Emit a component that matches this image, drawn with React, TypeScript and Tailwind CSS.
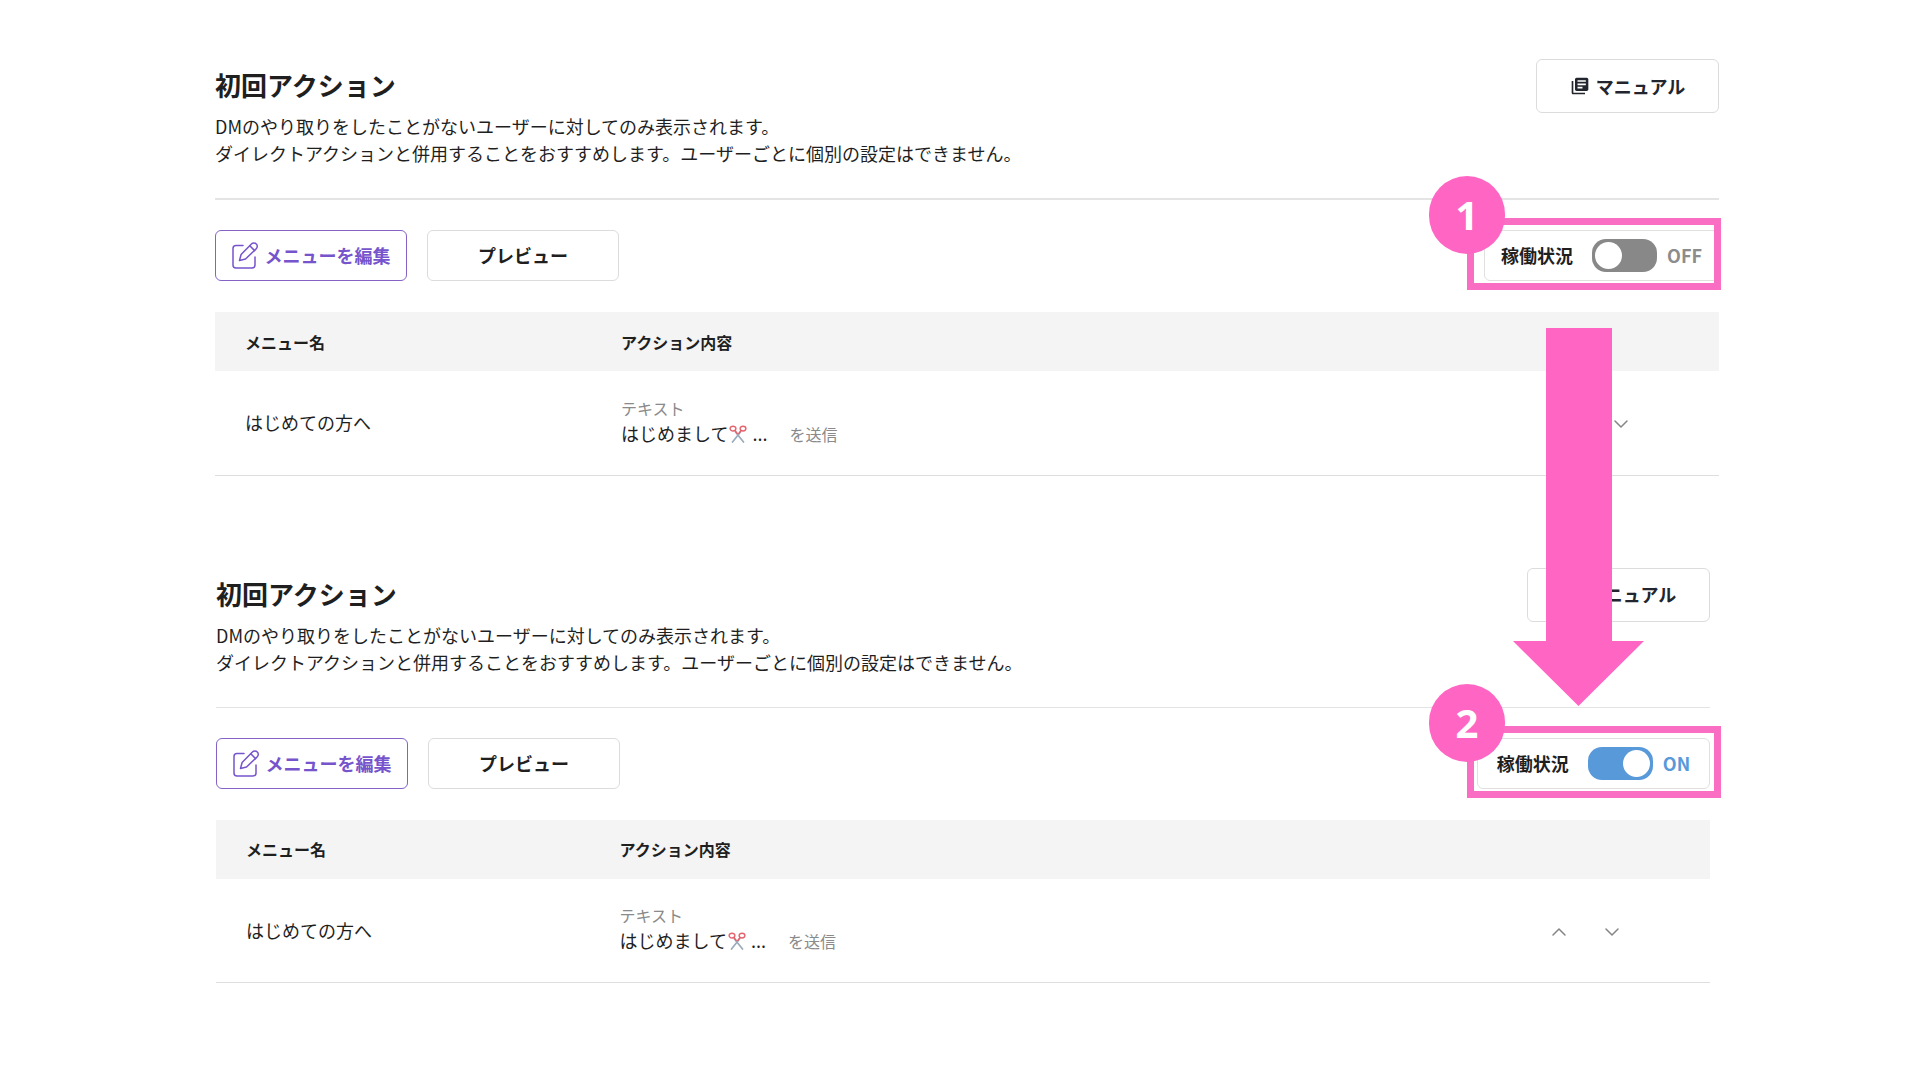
import { useId, useState } from 'react';
import { MdLibraryBooks } from 'react-icons/md';

interface StatusToggleProps {
  step: number;
  defaultOn: boolean;
  widthClass: string;
  frameClass: string;
}

interface ActionPanelProps extends StatusToggleProps {
  className?: string;
  dividerClass: string;
}

function EditIcon() {
  return (
    <svg
      width="27"
      height="27"
      viewBox="0 0 27 27"
      fill="none"
      stroke="currentColor"
      strokeWidth="1.5"
      strokeLinecap="round"
      strokeLinejoin="round"
      aria-hidden="true"
    >
      <path d="M11 3.5H4a3 3 0 0 0-3 3v16.500a3 3 0 0 0 3 3h16a3 3 0 0 0 3-3V15" />
      <path d="M7.500 18.500l1.600-6L19.400 2a3.300 3.300 0 0 1 4.900 0 3.300 3.300 0 0 1 0 4.700L13.500 17z" />
      <path d="M17.800 3.800l4.800 4.800" />
    </svg>
  );
}

function ScissorsIcon() {
  return (
    <svg className="mx-px inline-block align-[-2px]" width="18" height="18" viewBox="0 0 18 18" fill="none" aria-hidden="true">
      <path d="M6.500 7L14.500 17M11.500 7L3.500 17" stroke="#9aabba" strokeWidth="1.700" strokeLinecap="round" />
      <ellipse cx="4" cy="3.600" rx="2.900" ry="2.400" stroke="#e4636c" strokeWidth="1.400" />
      <ellipse cx="14" cy="3.600" rx="2.900" ry="2.400" stroke="#e4636c" strokeWidth="1.400" />
      <path d="M6 5.500l2.200 3M12 5.500l-2.200 3" stroke="#e4636c" strokeWidth="1.400" strokeLinecap="round" />
    </svg>
  );
}

function Chevron({ up = false }: { up?: boolean }) {
  return (
    <svg
      width="16"
      height="16"
      viewBox="0 0 16 16"
      fill="none"
      stroke="#858585"
      strokeWidth="1.500"
      strokeLinecap="round"
      strokeLinejoin="round"
      aria-hidden="true"
    >
      <path d={up ? 'M2 11l6-6 6 6' : 'M2 5l6 6 6-6'} />
    </svg>
  );
}

function StatusToggle({ step, defaultOn, widthClass, frameClass }: StatusToggleProps) {
  const id = useId();
  const [on, setOn] = useState(defaultOn);

  return (
    <div className={`relative flex h-[51px] items-center justify-center rounded-md border border-[#e0e0e0] ${widthClass}`}>
      <label htmlFor={id} className="mr-[19px] text-[18px] font-bold">
        稼働状況
      </label>
      <input
        id={id}
        type="checkbox"
        role="switch"
        checked={on}
        onChange={(e) => setOn(e.target.checked)}
        className="relative mr-[10px] h-[33px] w-[65px] cursor-pointer appearance-none rounded-[14px] bg-[#888888] before:absolute before:top-[3px] before:left-[3px] before:size-[27px] before:rounded-full before:bg-white checked:bg-[#5899da] checked:before:left-[35px]"
      />
      <span className={`text-[18px] font-bold ${on ? 'text-[#5899da]' : 'text-[#8c8c8c]'}`}>{on ? 'ON' : 'OFF'}</span>

      {/* Highlight frame with the step badge */}
      <div className={`pointer-events-none absolute -top-[13px] -bottom-[10px] border-7 border-[#f96dc3] ${frameClass}`}>
        <span className="absolute -top-[49px] -left-[45px] flex h-[78px] w-[76px] items-center justify-center rounded-full bg-[#ff66c4] font-['Open_Sans'] text-[40px] leading-none font-bold text-white">
          {step}
        </span>
      </div>
    </div>
  );
}

function ActionPanel({ className = '', dividerClass, ...status }: ActionPanelProps) {
  return (
    <section className={className}>
      <header className={`flex items-start justify-between border-[#e4e4e4] pb-[31px] ${dividerClass}`}>
        <div className="pt-2">
          <h1 className="text-[26px] leading-[36px] font-bold">初回アクション</h1>
          <p className="mt-[10px] text-[18px] leading-[27px]">
            DMのやり取りをしたことがないユーザーに対してのみ表示されます。
            <br />
            ダイレクトアクションと併用することをおすすめします。ユーザーごとに個別の設定はできません。
          </p>
        </div>
        <button className="flex h-[54px] w-[183px] items-center justify-center gap-[6px] rounded-md border border-[#dcdcdc] text-[18px] font-bold text-[#22252d]">
          <MdLibraryBooks size={20} />
          マニュアル
        </button>
      </header>

      {/* Toolbar */}
      <div className="flex items-center justify-between pt-[30px] pb-[31px]">
        <div className="flex gap-5">
          <button className="flex h-[51px] w-48 items-center justify-center gap-[6px] rounded-md border border-[#8463c4] text-[18px] font-bold text-[#7654cc]">
            <EditIcon />
            メニューを編集
          </button>
          <button className="h-[51px] w-48 rounded-md border border-[#dcdcdc] text-[18px] font-bold">
            プレビュー
          </button>
        </div>
        <StatusToggle {...status} />
      </div>

      <table className="w-full table-fixed text-left">
        <thead>
          <tr className="h-[59px] bg-[#f4f4f4] text-[16px]">
            <th className="w-1/4 px-[30px] font-bold">メニュー名</th>
            <th className="px-[30px] font-bold">アクション内容</th>
            <th className="w-1/4" aria-label="並び替え" />
          </tr>
        </thead>
        <tbody>
          <tr className="h-[104px] border-b border-[#dedede] text-[18px]">
            <td className="px-[30px]">はじめての方へ</td>
            <td className="px-[30px] pb-0.5">
              <div className="text-[16px] leading-[24px] text-[#8a8a8a]">テキスト</div>
              <div className="leading-[27px]">
                はじめまして
                <ScissorsIcon /> ...
                <span className="ml-[22px] text-[16px] text-[#8a8a8a]">を送信</span>
              </div>
            </td>
            <td className="pr-[90px]">
              <div className="flex justify-end gap-[37px] pt-[3px]">
                <button aria-label="上へ">
                  <Chevron up />
                </button>
                <button aria-label="下へ">
                  <Chevron />
                </button>
              </div>
            </td>
          </tr>
        </tbody>
      </table>
    </section>
  );
}

export default function App() {
  return (
    <main className="relative min-h-screen bg-white pt-[59px] pr-[201px] pb-[97px] pl-[215px] font-['Noto_Sans_CJK_JP',sans-serif] text-[#1f1f1f]">
      <ActionPanel
        step={1}
        defaultOn={false}
        dividerClass="border-b-2"
        widthClass="w-[235px]"
        frameClass="-left-[18px] -right-[3px]"
      />
      <ActionPanel
        className="mt-[92px] mr-[9px] ml-px"
        step={2}
        defaultOn
        dividerClass="border-b"
        widthClass="w-[233px]"
        frameClass="-left-[11px] -right-[12px]"
      />

      {/* Arrow from step 1 to step 2 */}
      <svg
        className="pointer-events-none absolute top-[328px] right-[276px]"
        width="131"
        height="378"
        viewBox="0 0 131 378"
        fill="#ff66c4"
        aria-hidden="true"
      >
        <path d="M33 0h66v313h32L65.500 378 0 313h33z" />
      </svg>
    </main>
  );
}
